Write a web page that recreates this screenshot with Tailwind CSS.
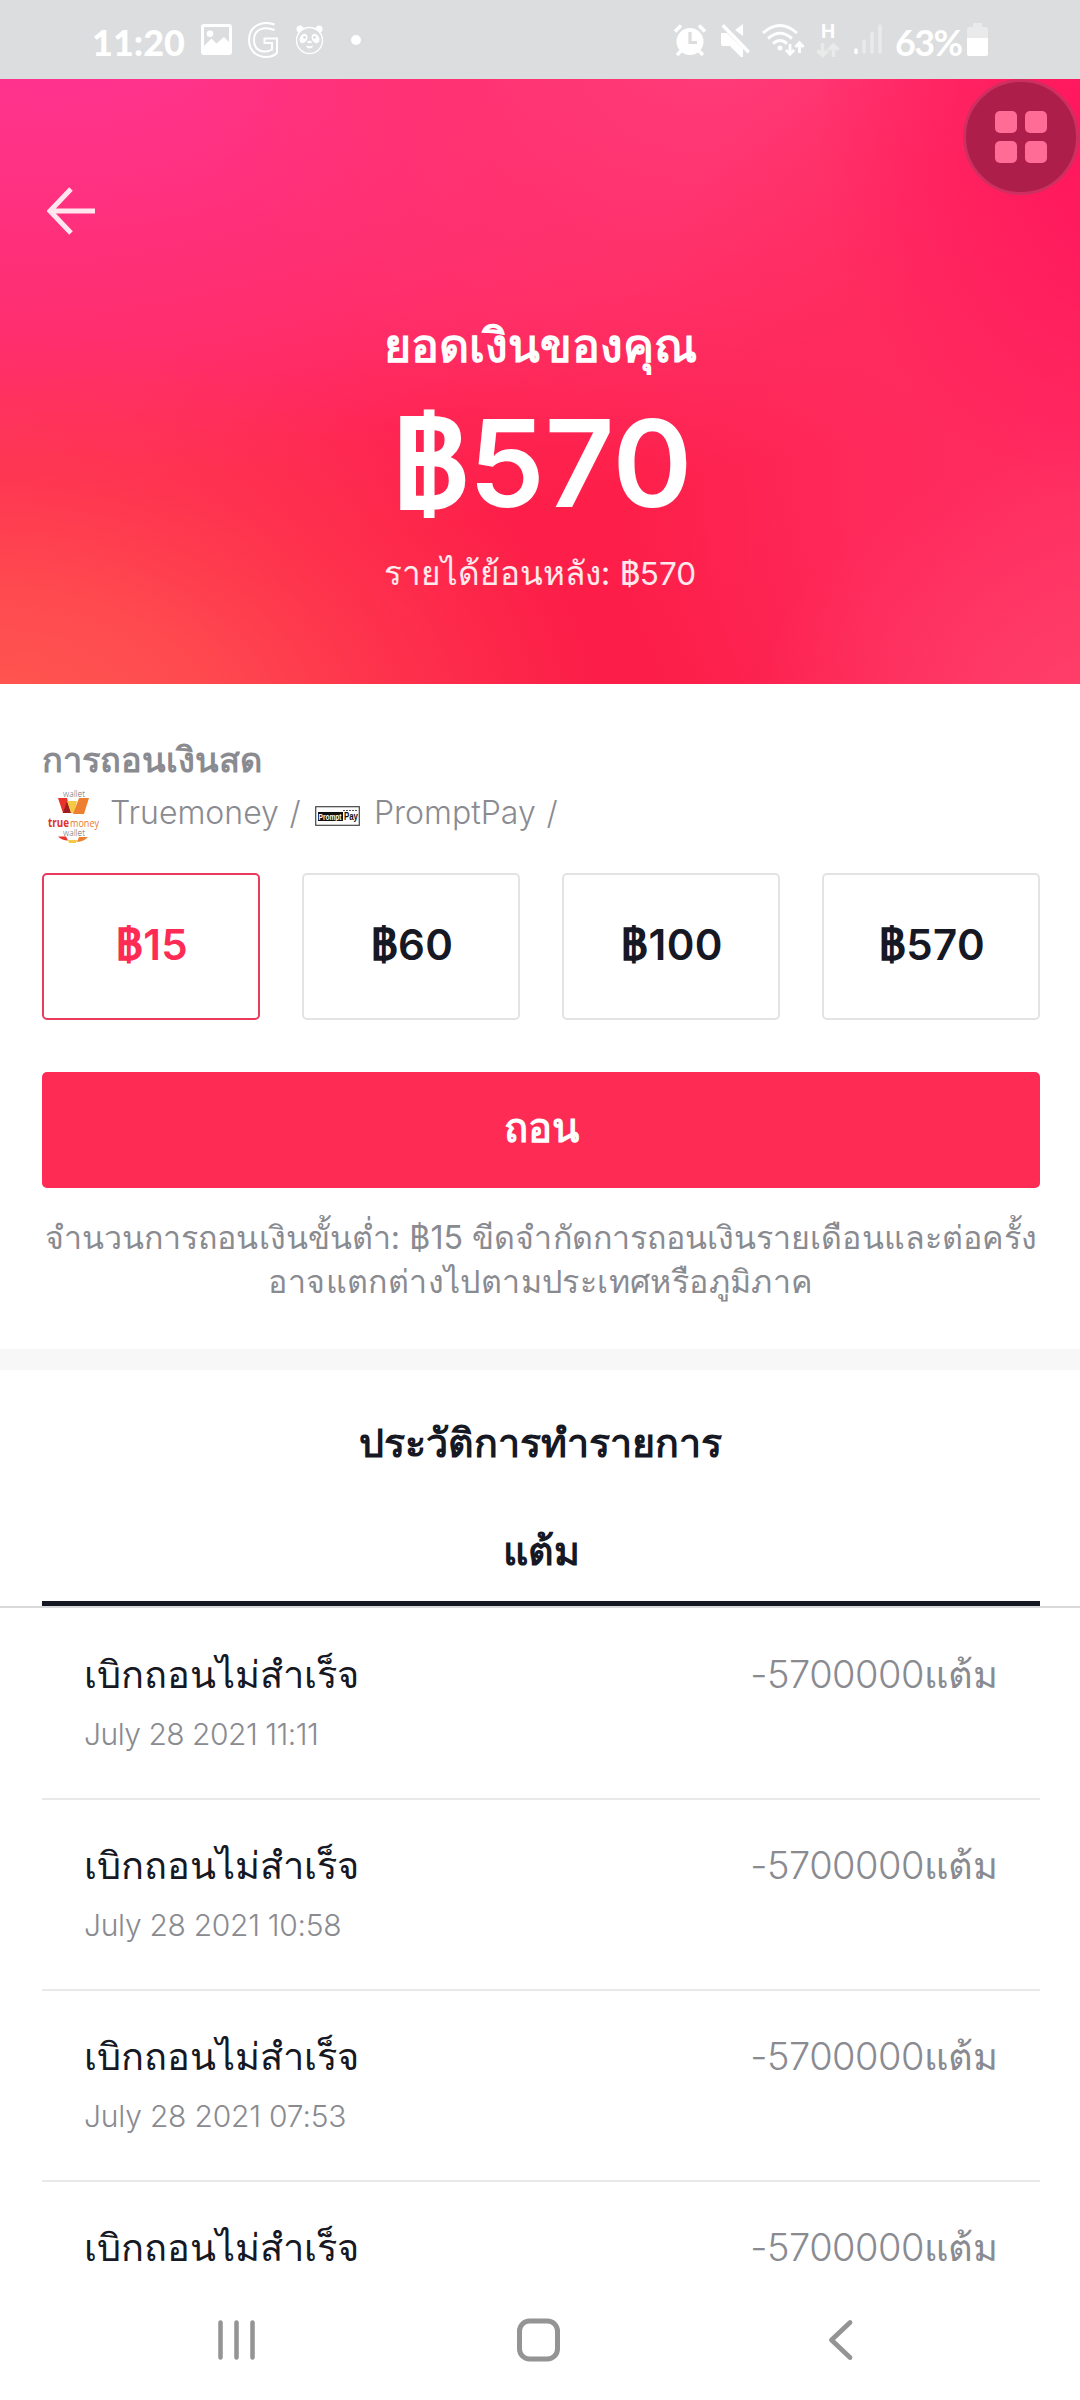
<!DOCTYPE html>
<html lang="th">
<head>
<meta charset="utf-8">
<title>ยอดเงินของคุณ</title>
<script src="https://cdn.jsdelivr.net/npm/@tailwindcss/browser@4"></script>
</head>
<body class="bg-white">
<div class="relative flex h-[2400px] w-[1080px] flex-col overflow-hidden bg-white font-['Inter',sans-serif] text-[#161823]">

  <!-- Status bar -->
  <div class="flex h-[79px] shrink-0 items-center justify-between bg-[#dcddde] pr-[92px] pl-[92px] text-white">
    <div class="flex h-full items-center">
      <span class="w-[109px] pt-1 font-['Lato',sans-serif] text-[36px] leading-[40px] font-black">11:20</span>
      <svg class="h-[31px] w-[31px]" viewBox="0 0 31 31"><path fill="#fff" fill-rule="evenodd" d="M3 0h25a3 3 0 0 1 3 3v25a3 3 0 0 1-3 3H3a3 3 0 0 1-3-3V3a3 3 0 0 1 3-3ZM3 3v19l7.500-7.500 5 5L23 13l5 5V3ZM9 6.500a3.300 3.300 0 1 1 0 6.600 3.300 3.300 0 0 1 0-6.600Z"/></svg>
      <svg class="ml-[16px] h-[36px] w-[31px]" viewBox="0 0 31 36" fill="none" stroke="#fff" stroke-width="2"><path d="M26.500 2.500C14-2 1 4 1 18c0 10 7 17 17 17 5 0 8-1 11-4V16.500H16.500V21H24v6.500c-7 4-18 2.500-18-9.500C6 7 16 4 26.500 8"/></svg>
      <svg class="ml-[16px] h-[30px] w-[30px]" viewBox="0 0 30 30"><circle cx="5" cy="4" r="3.500" fill="#fff"/><circle cx="24" cy="4" r="3.500" fill="#fff"/><circle cx="14.500" cy="15.500" r="13" fill="#dcddde" stroke="#fff" stroke-width="1.300"/><ellipse cx="8.500" cy="13.500" rx="3.600" ry="5" transform="rotate(30 8.500 13.500)" fill="#fff"/><ellipse cx="20.500" cy="13.500" rx="3.600" ry="5" transform="rotate(-30 20.500 13.500)" fill="#fff"/><circle cx="9.500" cy="12.500" r="1.400" fill="#dcddde"/><circle cx="19.500" cy="12.500" r="1.400" fill="#dcddde"/><ellipse cx="14.500" cy="17" rx="2.300" ry="1.200" fill="#fff"/><path d="M11 20.500q3.500 1.500 7 0-.5 3-3.500 3t-3.500-3Z" fill="#fff"/></svg>
      <span class="ml-[26px] h-[10px] w-[10px] rounded-full bg-white"></span>
    </div>
    <div class="flex h-full items-center">
      <svg class="h-[34px] w-[34px]" viewBox="0 0 34 34" fill="none" stroke="#fff"><circle cx="17" cy="18.500" r="13.500" fill="#fff" stroke="none"/><path stroke-width="3.500" d="M2 8.500 8 2.500M26 2.500l6 6M8 28l-4 4M26 28l4 4"/><path stroke="#dcddde" stroke-width="3.200" d="M17 9v10.500h7"/></svg>
      <svg class="ml-[14px] h-[34px] w-[30px]" viewBox="0 0 30 34"><path fill="#fff" d="M0 10h6l16 16v8h-2L9 23H2q-2 0-2-2ZM22 1v12l-8-6ZM3 1l26 27-2.500 2.500L0.500 3.500Z"/></svg>
      <svg class="ml-[11px] h-[34px] w-[43px]" viewBox="0 0 43 34" fill="none" stroke="#fff" stroke-width="3"><path d="M1 10q17-15 34 0M6 15.500q12-10.500 24 0M11 20.500q7-6 14 0"/><circle cx="18" cy="25" r="2.500" fill="#fff" stroke="none"/><path stroke-width="2.800" d="M28 21v9M24 27l4 4.200 4-4.200M37.500 30V20M33.500 24l4-4.200 4 4.200"/></svg>
      <span class="ml-[11px] flex h-[36px] w-[24px] flex-col items-center pt-[1px]">
        <span class="text-[19px] leading-[17px] font-bold">H</span>
        <svg class="mt-[3px] h-[15px] w-[24px]" viewBox="0 0 24 15" fill="none" stroke="#e9eae9" stroke-width="3.500"><path d="M6.500 0v11M1.500 7.500l5 5 5-5M17.500 14V3M12.500 7l5-5 5 5"/></svg>
      </span>
      <svg class="ml-[14px] h-[31px] w-[28px]" viewBox="0 0 28 31" stroke="#e9eae9" stroke-width="3.500" stroke-linecap="round"><path d="M10 17v11M18 9.500V28M26 2v26"/><path stroke="#fff" d="M2 26v2.500"/></svg>
      <span class="ml-[13px] w-[68px] pt-1 font-['Lato',sans-serif] text-[36px] leading-[40px] font-bold tracking-[-1.600px]">63%</span>
      <svg class="ml-[4px] h-[34px] w-[21px]" viewBox="0 0 21 34"><path fill="#e9eae9" d="M6 0h9v4h4q2 0 2 2v10H0V6q0-2 2-2h4Z"/><path fill="#fff" d="M0 15h21v16q0 2-2 2H2q-2 0-2-2Z"/></svg>
    </div>
  </div>

  <!-- Balance -->
  <header class="flex h-[605px] shrink-0 flex-col items-center bg-[radial-gradient(ellipse_600px_400px_at_0%_108%,#ff5950_0%,#ff4f50e6_35%,#ff404f99_65%,transparent_100%),radial-gradient(ellipse_380px_300px_at_105%_108%,#ff446c_0%,transparent_100%),radial-gradient(ellipse_330px_380px_at_106%_8%,#ff125c_0%,#ff175dbb_40%,transparent_100%),radial-gradient(ellipse_520px_560px_at_105%_66%,#ff2c62_0%,#ff2b5ecc_55%,transparent_100%),radial-gradient(ellipse_520px_420px_at_66%_-5%,#ff3b79_0%,#ff3470aa_50%,transparent_100%),radial-gradient(ellipse_760px_460px_at_5%_-10%,#ff3595_0%,#ff3080bb_50%,transparent_100%),linear-gradient(168deg,#ff2f6a_15%,#ff2b5c_40%,#fd1f49_65%,#fb1d47_100%)] text-white">
    <div class="flex w-full px-[47px] pt-[108px]">
      <svg class="h-[48px] w-[49px]" viewBox="0 0 49 48" fill="none" stroke="#ffe6ee" stroke-width="5"><path d="M48 24H4M24 2 3 24l21 22"/></svg>
    </div>
    <h1 class="mt-[80px] text-[46.600px] leading-[60px] font-semibold">ยอดเงินของคุณ</h1>
    <div class="mt-[19px] flex h-[130px] items-baseline pl-[5px] text-[121px] leading-[130px] font-semibold"><span class="font-['Noto_Sans'] text-[124px] font-bold">฿</span><span>570</span></div>
    <div class="mt-[26px] text-[33.300px] leading-[44px] whitespace-nowrap text-white/90">รายได้ย้อนหลัง: <span class="font-['Noto_Sans']">฿</span><span class="text-[31.500px]">570</span></div>
  </header>

  <!-- Withdrawal -->
  <section class="flex shrink-0 flex-col pt-[54px] pr-[40px] pl-[42px]">
    <h2 class="text-[34.400px] leading-[44px] font-semibold text-[#8a8b91]">การถอนเงินสด</h2>
    <div class="mt-[7px] flex h-[52px] text-[32px] leading-[44px] font-light text-[#8a8b91]">
      <svg class="ml-[5px] h-[54px] w-[54px] overflow-visible font-['Open_Sans']" viewBox="0 0 54 54">
        <text x="16" y="7.500" font-size="9" textLength="22" lengthAdjust="spacingAndGlyphs" fill="#666">wallet</text>
        <path fill="#e8332a" d="M11 9h9l4 15h-8Z"/><path fill="#9c1c1f" d="m20 12 4 12h-8Z"/><path fill="#f6c945" d="M20 12h10l-3 12h-3Z"/><path fill="#ee7f31" d="M32 9h10l-5 16H26Z"/>
        <text x="1" y="38" font-size="11.500" font-weight="700" textLength="21" lengthAdjust="spacingAndGlyphs" fill="#e0302a">true</text>
        <text x="23" y="38" font-size="11.500" font-weight="400" textLength="29" lengthAdjust="spacingAndGlyphs" fill="#e8792f">money</text>
        <text x="16" y="47" font-size="9" textLength="22" lengthAdjust="spacingAndGlyphs" fill="#666">wallet</text>
        <path fill="#e8332a" d="M11 47.500h8l2 4q-6 0-10-4Z"/><path fill="#f6c945" d="M21 51h9l-1 3h-7Z"/><path fill="#ee7f31" d="M32 48h9q-4 4.500-11 5Z"/>
      </svg>
      <span class="mt-[2px] ml-[9px] w-[177px]">Truemoney</span><span class="mt-[2px] w-[16px] text-center">/</span>
      <svg class="mt-[17px] ml-[12px] h-[20px] w-[45px] font-['Liberation_Sans']" viewBox="0 0 45 20"><rect x=".7" y=".7" width="43.600" height="18.600" fill="#fff" stroke="#444" stroke-width="1.200"/><path fill="#111" d="M3 6h25v9H3Z"/><text x="3.500" y="13.500" font-size="9" font-weight="700" textLength="23" lengthAdjust="spacingAndGlyphs" fill="#fff">Prompt</text><text x="29" y="13.500" font-size="10" font-weight="700" textLength="14" lengthAdjust="spacingAndGlyphs" fill="#111">Pay</text><path d="M28 4.500h14" stroke="#555" stroke-dasharray="2 1"/></svg>
      <span class="mt-[2px] ml-[14px] w-[168px]">PromptPay</span><span class="mt-[2px] w-[20px] text-center">/</span>
    </div>
    <div class="mt-[32px] grid grid-cols-4 gap-[42px] text-center text-[42px] leading-[50px] font-semibold tracking-[0.300px]">
      <div class="h-[147px] rounded-[5px] border-2 border-[#ea3b5c] pt-[43px] pl-[2px] text-[#fe2c55]"><span class="font-['Noto_Sans'] text-[44px] font-bold">฿</span>15</div>
      <div class="h-[147px] rounded-[5px] border-2 border-[#e3e3e4] pt-[43px] pl-[2px]"><span class="font-['Noto_Sans'] text-[44px] font-bold">฿</span>60</div>
      <div class="h-[147px] rounded-[5px] border-2 border-[#e3e3e4] pt-[43px] pl-[2px]"><span class="font-['Noto_Sans'] text-[44px] font-bold">฿</span>100</div>
      <div class="h-[147px] rounded-[5px] border-2 border-[#e3e3e4] pt-[43px] pl-[2px]"><span class="font-['Noto_Sans'] text-[44px] font-bold">฿</span>570</div>
    </div>
    <button class="mt-[52px] h-[116px] rounded-[5px] bg-[#fe2c55] pb-[4px] text-[40px] leading-[50px] font-semibold text-white">ถอน</button>
    <p class="mt-[28px] text-center text-[32.200px] leading-[44px] whitespace-nowrap text-[#8a8b91]"><span class="tracking-[0.060px]">จำนวนการถอนเงินขั้นต่ำ: ฿15 ขีดจำกัดการถอนเงินรายเดือนและต่อครั้ง</span><br><span class="tracking-[0.400px]">อาจแตกต่างไปตามประเทศหรือภูมิภาค</span></p>
  </section>

  <div class="mt-[45px] h-[21px] shrink-0 bg-[#f7f7f7]"></div>

  <!-- History -->
  <section class="flex shrink-0 flex-col">
    <h2 class="mt-[48px] text-center text-[39.400px] leading-[50px] font-semibold">ประวัติการทำรายการ</h2>
    <div class="mt-[58px] border-b-2 border-[#dadada] pr-[40px] pl-[42px]">
      <div class="h-[80px] border-b-5 border-[#161823] text-center text-[39.400px] leading-[50px] font-semibold">แต้ม</div>
    </div>
    <ul class="flex flex-col pt-[1px] pr-[40px] pl-[42px] text-[38px] leading-[50px]">
      <li class="flex h-[191px] shrink-0 justify-between border-b-2 border-[#e9e9e9] px-[42px] pt-[40px]">
        <div><div>เบิกถอนไม่สำเร็จ</div><div class="mt-[15px] text-[30px] leading-[40px] font-light tracking-[-0.500px] text-[#8a8b91]">July 28 2021 11:11</div></div>
        <div class="font-light text-[#8a8b91]"><span class="tracking-[-0.500px]">-5700000</span>แต้ม</div>
      </li>
      <li class="flex h-[191px] shrink-0 justify-between border-b-2 border-[#e9e9e9] px-[42px] pt-[40px]">
        <div><div>เบิกถอนไม่สำเร็จ</div><div class="mt-[15px] text-[30px] leading-[40px] font-light tracking-[-0.300px] text-[#8a8b91]">July 28 2021 10:58</div></div>
        <div class="font-light text-[#8a8b91]"><span class="tracking-[-0.500px]">-5700000</span>แต้ม</div>
      </li>
      <li class="flex h-[191px] shrink-0 justify-between border-b-2 border-[#e9e9e9] px-[42px] pt-[40px]">
        <div><div>เบิกถอนไม่สำเร็จ</div><div class="mt-[15px] text-[30px] leading-[40px] font-light tracking-[-0.200px] text-[#8a8b91]">July 28 2021 07:53</div></div>
        <div class="font-light text-[#8a8b91]"><span class="tracking-[-0.500px]">-5700000</span>แต้ม</div>
      </li>
      <li class="flex h-[98px] shrink-0 justify-between px-[42px] pt-[40px]">
        <div>เบิกถอนไม่สำเร็จ</div>
        <div class="font-light text-[#8a8b91]"><span class="tracking-[-0.500px]">-5700000</span>แต้ม</div>
      </li>
    </ul>
  </section>

  <!-- Navigation bar -->
  <nav class="flex grow items-center pl-[217px]">
    <svg class="h-[44px] w-[40px]" viewBox="0 0 40 44" stroke="#949494" stroke-width="4.500" stroke-linecap="round"><path d="M3.500 4.500v35M19.500 4.500v35M35.500 4.500v35"/></svg>
    <svg class="ml-[259px] h-[44px] w-[46px]" viewBox="0 0 46 44" fill="none" stroke="#949494" stroke-width="5"><rect x="3.500" y="3" width="38" height="38" rx="10"/></svg>
    <svg class="ml-[265px] h-[44px] w-[28px]" viewBox="0 0 28 44" fill="none" stroke="#949494" stroke-width="4.800" stroke-linecap="round" stroke-linejoin="round"><path d="M23 4.500 4.500 22 23 39.500"/></svg>
  </nav>

  <!-- Floating assistant button -->
  <div class="absolute top-[79px] left-[963px] grid h-[116px] w-[116px] place-content-center rounded-full border-3 border-[#cf2f60] bg-[#ae1e4b]">
    <div class="grid grid-cols-2 gap-x-[8px] gap-y-[8px]">
      <i class="h-[22px] w-[22px] rounded-[5px] bg-[#ff6c96]"></i><i class="h-[22px] w-[22px] rounded-[5px] bg-[#ff6c96]"></i>
      <i class="h-[22px] w-[22px] rounded-[5px] bg-[#ff6c96]"></i><i class="h-[22px] w-[22px] rounded-[5px] bg-[#ff6c96]"></i>
    </div>
  </div>
</div>
</body>
</html>
